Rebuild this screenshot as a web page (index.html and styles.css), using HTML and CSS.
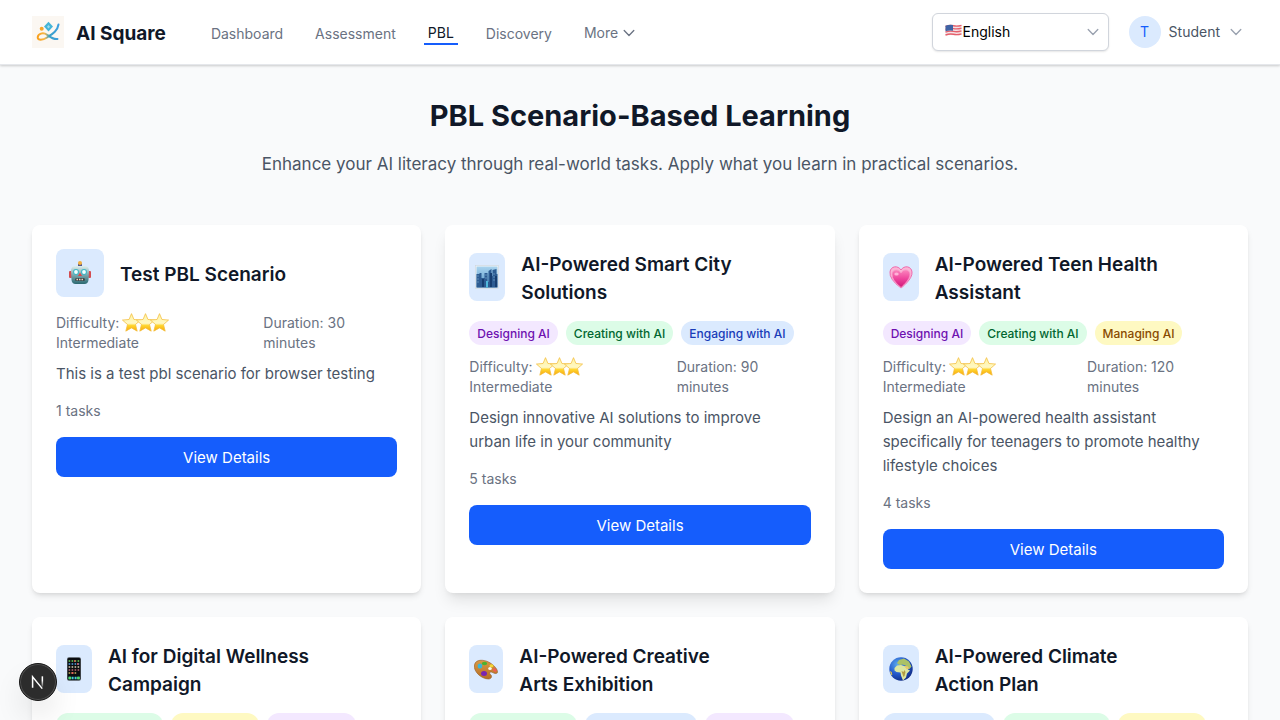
FILE: index.html
```html
<!DOCTYPE html>
<html lang="en">
<head>
<meta charset="utf-8">
<meta name="viewport" content="width=device-width, initial-scale=1">
<title>AI Square - PBL</title>
<link rel="stylesheet" href="styles.css">
</head>
<body>
<svg class="defs" aria-hidden="true">
  <defs>
    <linearGradient id="starFill" x1="0" y1="0" x2="0" y2="1"><stop offset="0" stop-color="#fff3a0"/><stop offset=".55" stop-color="#fff8c4"/><stop offset=".68" stop-color="#ffd52e"/><stop offset="1" stop-color="#f9a60c"/></linearGradient>
    <symbol id="star" viewBox="0 0 18 18"><path d="M9 .6l2.300 5.500 6.300.6-4.800 4.200 1.600 6.300L9 14.100l-5.400 3.100 1.600-6.300L.4 6.700l6.300-.6z" fill="url(#starFill)" stroke="#f3bd3a" stroke-width=".7" stroke-linejoin="round"/></symbol>
    <symbol id="chevron" viewBox="0 0 12 12"><path d="M1.200 3.500L6 8.500l4.800-5" fill="none" stroke="currentColor" stroke-width="1.300" stroke-linecap="round" stroke-linejoin="round"/></symbol>
  </defs>
</svg>
<header class="topbar">
  <a class="brand" href="#">
    <svg class="brand-logo" viewBox="0 0 32 32" aria-hidden="true">
      <defs><linearGradient id="ribbon" x1="0" x2="1"><stop offset="0" stop-color="#f9a01b"/><stop offset=".35" stop-color="#f6b84c"/><stop offset=".55" stop-color="#3aa0c4"/><stop offset="1" stop-color="#3d9fe0"/></linearGradient></defs>
      <rect width="32" height="32" fill="#fbf7f2"/>
      <path d="M26.500 8.500c-1 7-7 10-11.500 13-4 2.800-9.500 3-9.300-.2.300-3.500 5.300-5.500 9.300-2.600 3 2.200 6.500 5 10.500 4.300" fill="none" stroke="url(#ribbon)" stroke-width="2" stroke-linecap="round"/>
      <circle cx="9.700" cy="12.800" r="2" fill="#f6a62c"/>
      <path d="M16.500 5.700l4.500 4.900-4.500 4.900-4.500-4.900z" fill="#45b5d8"/>
      <path d="M16.500 9l1.500 1.700-1.500 1.800-1.500-1.800z" fill="#9ddcec"/>
    </svg>
    <span class="brand-name">AI Square</span>
  </a>
  <nav class="nav">
    <a href="#">Dashboard</a>
    <a href="#">Assessment</a>
    <a class="active" href="#" aria-current="page">PBL</a>
    <a href="#">Discovery</a>
    <button type="button" class="more">More <svg class="chevron"><use href="#chevron"/></svg></button>
  </nav>
  <div class="tools">
    <div class="language">
      <select aria-label="Language"><option>English</option></select>
      <svg class="flag" viewBox="0 0 17 13" aria-hidden="true"><path d="M.5 2q4-1.500 8-.7t8-.5v10q-4 1.300-8 .5t-8 .5z" fill="#f4e3e6"/><path d="M.5 2.500q4-1.500 8-.7t8-.5M.5 5.300q4-1.500 8-.7t8-.5M.5 8.100q4-1.500 8-.7t8-.5M.5 11q4-1.500 8-.7t8-.5" fill="none" stroke="#e5606c" stroke-width="1.400"/><path d="M.5 1.700q4-1.500 7.500-.7v5.700Q4 6 .5 7.200z" fill="#3f63a5"/></svg>
      <svg class="chevron" aria-hidden="true"><use href="#chevron"/></svg>
    </div>
    <button type="button" class="profile"><span class="avatar">T</span><span>Student</span><svg class="chevron"><use href="#chevron"/></svg></button>
  </div>
</header>

<main class="page">
  <div class="intro">
    <h1>PBL Scenario-Based Learning</h1>
    <p>Enhance your AI literacy through real-world tasks. Apply what you learn in practical scenarios.</p>
  </div>

  <div class="grid">
    <article class="card">
      <div class="card-head">
        <div class="icon wide"><svg viewBox="0 0 24 24" aria-hidden="true">
          <defs><linearGradient id="robot" x1="0" y1="0" x2="0" y2="1"><stop offset="0" stop-color="#dfeeed"/><stop offset=".45" stop-color="#83aeb4"/><stop offset="1" stop-color="#2b6971"/></linearGradient></defs>
          <rect x="10" y="2.500" width="4" height="4" fill="#53588c"/><circle cx="12" cy="2" r="2" fill="#f3ae3e"/>
          <rect x="1" y="10" width="3" height="7" rx="1" fill="#d44c50"/><rect x="20" y="10" width="3" height="7" rx="1" fill="#d44c50"/>
          <path d="M6 5h12q3 1 3 5l-.5 9q-.5 4-4 4h-9q-3.500 0-4-4L3 10q0-4 3-5z" fill="url(#robot)"/>
          <circle cx="8" cy="11" r="3" fill="#41b7c6"/><circle cx="16" cy="11" r="3" fill="#41b7c6"/><circle cx="8" cy="11" r="1.900" fill="#f4ffff"/><circle cx="16" cy="11" r="1.900" fill="#f4ffff"/>
          <path d="M12 11.500l2 3.500h-4z" fill="#df4747"/><rect x="7" y="17" width="10" height="3" rx="1.500" fill="#3d494b"/><path d="M8.500 18.500h7" stroke="#efd3bc" stroke-width="1.500" stroke-dasharray="1.500 1"/>
        </svg></div>
        <h2>Test PBL Scenario</h2>
      </div>
      <div class="meta">
        <span>Difficulty: <span class="stars"><svg><use href="#star"/></svg><svg><use href="#star"/></svg><svg><use href="#star"/></svg></span> Intermediate</span>
        <span>Duration: 30<br>minutes</span>
      </div>
      <p class="desc">This is a test pbl scenario for browser testing</p>
      <p class="tasks">1 tasks</p>
      <a class="details" href="#">View Details</a>
    </article>

    <article class="card raised">
      <div class="card-head">
        <div class="icon"><svg viewBox="0 0 24 24" aria-hidden="true">
          <defs><linearGradient id="sky" x1="0" y1="0" x2="0" y2="1"><stop offset="0" stop-color="#a9d4ef"/><stop offset="1" stop-color="#5393c5"/></linearGradient></defs>
          <rect x=".5" y=".5" width="23" height="23" fill="#f5f6f6" stroke="#cdd5da" stroke-width=".6"/><rect x="1.500" y="1.500" width="21" height="21" fill="url(#sky)"/>
          <path d="M1.500 22.500V9h3v-1h2v5h3V8h3v9h1V6l3-2v7h1V5l4-1v5h1v13.500z" fill="#2d5c92"/><path d="M7 14h2v8H7zM15 8h2v14h-2zM20 11h2v11h-2z" fill="#173e70"/><path d="M11 16h2v6.500h-2z" fill="#51b9dc"/><path d="M2.500 11h1m-1 3h1m-1 3h1m7-7h1m-1 3h1m7-4h1m-1 3h1m-1 3h1" stroke="#91bddf"/>
        </svg></div>
        <h2>AI-Powered Smart City Solutions</h2>
      </div>
      <div class="tags"><span class="tag purple">Designing AI</span><span class="tag green">Creating with AI</span><span class="tag blue">Engaging with AI</span></div>
      <div class="meta">
        <span>Difficulty: <span class="stars"><svg><use href="#star"/></svg><svg><use href="#star"/></svg><svg><use href="#star"/></svg></span> Intermediate</span>
        <span>Duration: 90<br>minutes</span>
      </div>
      <p class="desc">Design innovative AI solutions to improve urban life in your community</p>
      <p class="tasks">5 tasks</p>
      <a class="details" href="#">View Details</a>
    </article>

    <article class="card">
      <div class="card-head">
        <div class="icon"><svg viewBox="0 0 24 24" aria-hidden="true">
          <defs><linearGradient id="heart" x1="0" y1="0" x2="0" y2="1"><stop offset="0" stop-color="#fb86bd"/><stop offset=".5" stop-color="#ee459d"/><stop offset="1" stop-color="#cf1777"/></linearGradient></defs>
          <path d="M12 23Q0 14 1 7c.5-6 8-7 11-2 3-5 10.500-4 11 2 1 7-11 16-11 16z" fill="#fbb4d5" stroke="#ef6bae" stroke-width="1"/>
          <path d="M12 22.500Q2.500 15 3 9c.3-5 7-5.500 9-1 2-4.500 8.700-4 9 1 .5 6-9 13.500-9 13.500z" fill="url(#heart)" stroke="#f79dca" stroke-width=".8"/>
          <ellipse cx="7.500" cy="9" rx="2.200" ry="1.500" fill="#ffb2d8"/>
        </svg></div>
        <h2>AI-Powered Teen Health Assistant</h2>
      </div>
      <div class="tags"><span class="tag purple">Designing AI</span><span class="tag green">Creating with AI</span><span class="tag yellow">Managing AI</span></div>
      <div class="meta long">
        <span>Difficulty: <span class="stars"><svg><use href="#star"/></svg><svg><use href="#star"/></svg><svg><use href="#star"/></svg></span> Intermediate</span>
        <span>Duration: 120<br>minutes</span>
      </div>
      <p class="desc">Design an AI-powered health assistant specifically for teenagers to promote healthy lifestyle choices</p>
      <p class="tasks">4 tasks</p>
      <a class="details" href="#">View Details</a>
    </article>

    <article class="card">
      <div class="card-head">
        <div class="icon"><svg viewBox="0 0 24 24" aria-hidden="true">
          <rect x="5" y=".3" width="14" height="23.400" rx="2" fill="#4b5257"/><rect x="5.800" y="1" width="12.400" height="22" rx="1.300" fill="#0b0d10"/>
          <g stroke-width="1.600" stroke-dasharray="1.600 1.400"><path d="M6.600 4h11" stroke="#6dd45c"/><path d="M6.600 7h11" stroke="#55a5e6"/><path d="M6.600 10h11" stroke="#ddd0b2"/><path d="M6.600 13h11" stroke="#ba6571"/><path d="M6.600 16h8" stroke="#c8b15f"/></g>
          <path d="M6.600 21h11" stroke="#45cddb" stroke-width="2.400" stroke-dasharray="2 1"/><path d="M6.600 21h2.500m6 0h2.500" stroke="#54dc63" stroke-width="2.400"/><path d="M12 4h1.500m1.500 3h1.500m-7 9h2" stroke="#f2575b" stroke-width="1.600"/>
        </svg></div>
        <h2>AI for Digital Wellness Campaign</h2>
      </div>
      <div class="tags"><span class="tag green">Creating with AI</span><span class="tag yellow">Managing AI</span><span class="tag purple">Designing AI</span></div>
    </article>

    <article class="card">
      <div class="card-head">
        <div class="icon slim"><svg viewBox="0 0 24 24" aria-hidden="true">
          <defs><linearGradient id="wood" x1="0" y1="0" x2="0" y2="1"><stop offset="0" stop-color="#d99a45"/><stop offset="1" stop-color="#b66d24"/></linearGradient></defs>
          <path d="M.5 8c1-6 9-5.500 14-3 4 2 8.500 6 9 9.500.3 3-3 2-5 1-2-1.500-4 .5-2 2s1 4.500-2 4.500C7 22-1 14 .5 8z" fill="url(#wood)" stroke="#935a22" stroke-width=".6"/>
          <ellipse cx="16" cy="11.500" rx="1.800" ry="1.500" fill="#fbf5e9"/><ellipse cx="6" cy="9" rx="2.300" ry="2.600" fill="#38b7da"/><ellipse cx="10.500" cy="6.500" rx="2.700" ry="1.800" fill="#4bb22e"/><ellipse cx="17.500" cy="8.800" rx="2" ry="1.500" fill="#f3d834"/><ellipse cx="20.800" cy="13" rx="2" ry="1.500" transform="rotate(35 20.800 13)" fill="#f05b55"/><ellipse cx="10" cy="16.500" rx="3" ry="2.500" fill="#7a24b2"/>
        </svg></div>
        <h2>AI-Powered Creative Arts Exhibition</h2>
      </div>
      <div class="tags"><span class="tag green">Creating with AI</span><span class="tag blue">Engaging with AI</span><span class="tag purple">Designing AI</span></div>
    </article>

    <article class="card">
      <div class="card-head">
        <div class="icon"><svg viewBox="0 0 24 24" aria-hidden="true">
          <defs><radialGradient id="ocean" cx=".35" cy=".3" r=".75"><stop offset="0" stop-color="#5ba9ed"/><stop offset=".55" stop-color="#2459cc"/><stop offset="1" stop-color="#102c85"/></radialGradient></defs>
          <circle cx="12" cy="12" r="11.700" fill="url(#ocean)"/>
          <path d="M5.500 11l2.500-2.500 4-.5 3 1 3 .5 1 3 2 1-3 3-1 4-3 3-2-5-.5-3-4-.5-2-1.500z" fill="#dce6a0"/><path d="M8 6l2-3 5-1.500 5 3 2.500 5-2 2.500-3-1-1-2.500-3-1-2 .5-2-.5z" fill="#abc166"/><path d="M15 9l4 .5 1 2-2 1z" fill="#eac86b"/><path d="M12.500 14l2 1 1-2 1 2-1 4-1 1z" fill="#b29c41"/><path d="M.8 14l2 1 .5 3-1 .2z" fill="#d4bd58"/>
        </svg></div>
        <h2>AI-Powered Climate Action Plan</h2>
      </div>
      <div class="tags"><span class="tag blue">Engaging with AI</span><span class="tag green">Creating with AI</span><span class="tag yellow">Managing AI</span></div>
    </article>
  </div>
</main>

<button type="button" class="devtools" aria-label="Open developer tools">
  <svg viewBox="0 0 38 38" aria-hidden="true"><defs><linearGradient id="fade" x1="0" y1="0" x2="0" y2="1"><stop offset=".4" stop-color="#fff"/><stop offset="1" stop-color="#fff" stop-opacity=".2"/></linearGradient></defs><path d="M13.300 25V13.500L23.500 26" fill="none" stroke="#fff" stroke-width="1.600"/><rect x="22.800" y="13" width="1.600" height="11" fill="url(#fade)"/></svg>
</button>
</body>
</html>
```
FILE: styles.css
```css
* { box-sizing: border-box; }
body {
  margin: 0;
  background: #f9fafb;
  color: #101828;
  font-family: Inter, "Liberation Sans", sans-serif;
  font-size: 15px;
  line-height: 24px;
}
h1, h2, p { margin: 0; }
a { color: inherit; text-decoration: none; }
button { border: 0; padding: 0; background: none; font: inherit; color: inherit; cursor: pointer; }
.defs { position: absolute; width: 0; height: 0; }
.chevron { width: 12px; height: 12px; flex: none; }

.topbar {
  display: flex;
  align-items: center;
  height: 65px;
  padding: 0 32px;
  background: #fff;
  border-bottom: 1px solid #e5e7eb;
  box-shadow: 0 1px 3px rgba(0, 0, 0, .1), 0 1px 2px rgba(0, 0, 0, .1);
}
.brand { display: flex; align-items: center; gap: 12px; margin-right: 41px; font-size: 19px; line-height: 28px; font-weight: 700; }
.brand-logo { width: 32px; height: 32px; }
.brand-name { padding-top: 3px; }
.nav { display: flex; align-items: center; gap: 24px; padding-top: 3px; font-size: 14px; line-height: 20px; color: #6a7282; }
.nav a, .more { padding: 1px 4px 0; }
.nav .active { padding: 0 4px; border-bottom: 2px solid #155dfc; color: #101828; }
.nav .more { display: flex; align-items: center; gap: 5px; padding: 0 4px 2px; }
.tools { display: flex; align-items: center; gap: 20px; margin-left: auto; padding-right: 6px; font-size: 14px; line-height: 20px; }
.language { position: relative; width: 177px; color: #99a1af; }
.language select {
  appearance: none;
  width: 100%;
  height: 38px;
  padding: 0 30px;
  border: 1px solid #d1d5dc;
  border-radius: 6px;
  background: #fff;
  box-shadow: 0 1px 2px rgba(0, 0, 0, .1);
  color: #000;
  font: inherit;
}
.language svg { position: absolute; pointer-events: none; }
.flag { left: 13px; top: 11px; width: 17px; height: 13px; }
.language .chevron { right: 10px; top: 13px; }
.profile { display: flex; align-items: center; gap: 8px; color: #4a5565; }
.profile .chevron { margin-left: 2px; color: #99a1af; }
.avatar { display: grid; place-items: center; width: 32px; height: 32px; border-radius: 50%; background: #dbeafe; color: #155dfc; }

.page { padding: 32px; }
.intro { margin-bottom: 47px; padding-top: 1px; text-align: center; }
.intro h1 { margin-bottom: 16px; font-size: 29px; line-height: 36px; font-weight: 700; }
.intro p { font-size: 17px; line-height: 28px; color: #4a5565; }
.grid { display: grid; grid-template-columns: repeat(3, 1fr); gap: 24px; }
.card {
  padding: 24px;
  border-radius: 8px;
  background: #fff;
  box-shadow: 0 4px 6px -1px rgba(0, 0, 0, .1), 0 2px 4px -2px rgba(0, 0, 0, .1);
}
.raised { box-shadow: 0 10px 15px -3px rgba(0, 0, 0, .1), 0 4px 6px -4px rgba(0, 0, 0, .1); }
.card-head { display: flex; align-items: center; gap: 16px; margin-bottom: 16px; }
.card-head h2 { flex: 1; margin: 2px 0 -2px; padding-right: 60px; font-size: 19px; line-height: 28px; font-weight: 600; }
.icon { display: grid; place-items: center; flex: none; width: 36px; height: 48px; border-radius: 8px; background: #dbeafe; }
.icon.wide { width: 48px; }
.icon.slim { width: 34px; }
.icon svg { width: 24px; height: 24px; }
.tags { display: flex; gap: 8px; margin-bottom: 12px; }
.tag { padding: 5px 8px 3px; border-radius: 12px; font-size: 12px; line-height: 16px; font-weight: 500; white-space: nowrap; }
.purple { background: #f3e8ff; color: #6e11b0; }
.green { background: #dcfce7; color: #016630; }
.blue { background: #dbeafe; color: #193cb8; }
.yellow { background: #fef9c2; color: #894b00; }
.meta { display: grid; grid-template-columns: 10fr 7fr; gap: 16px; margin-bottom: 9px; font-size: 14px; line-height: 20px; color: #6a7282; }
.meta.long { grid-template-columns: 11fr 8fr; }
.stars { display: inline-flex; height: 19px; margin: 0 16px 0 -1px; vertical-align: -4px; }
.stars svg { width: 19px; height: 19px; margin-right: -5px; }
.desc { margin-bottom: 15px; padding-right: 12px; color: #4a5565; }
.tasks { margin-bottom: 16px; font-size: 14px; line-height: 20px; color: #6a7282; }
.details { display: block; padding: 9px 16px 7px; border-radius: 8px; background: #155dfc; color: #fff; text-align: center; }

.devtools { position: fixed; left: 19px; bottom: 19px; width: 38px; height: 38px; border: 1px solid #171717; border-radius: 50%; background: #2c2c2c; box-shadow: inset 0 0 0 1px #505050, 0 16px 32px -8px rgba(0, 0, 0, .24); }
.devtools svg { display: block; width: 36px; height: 36px; }
```
